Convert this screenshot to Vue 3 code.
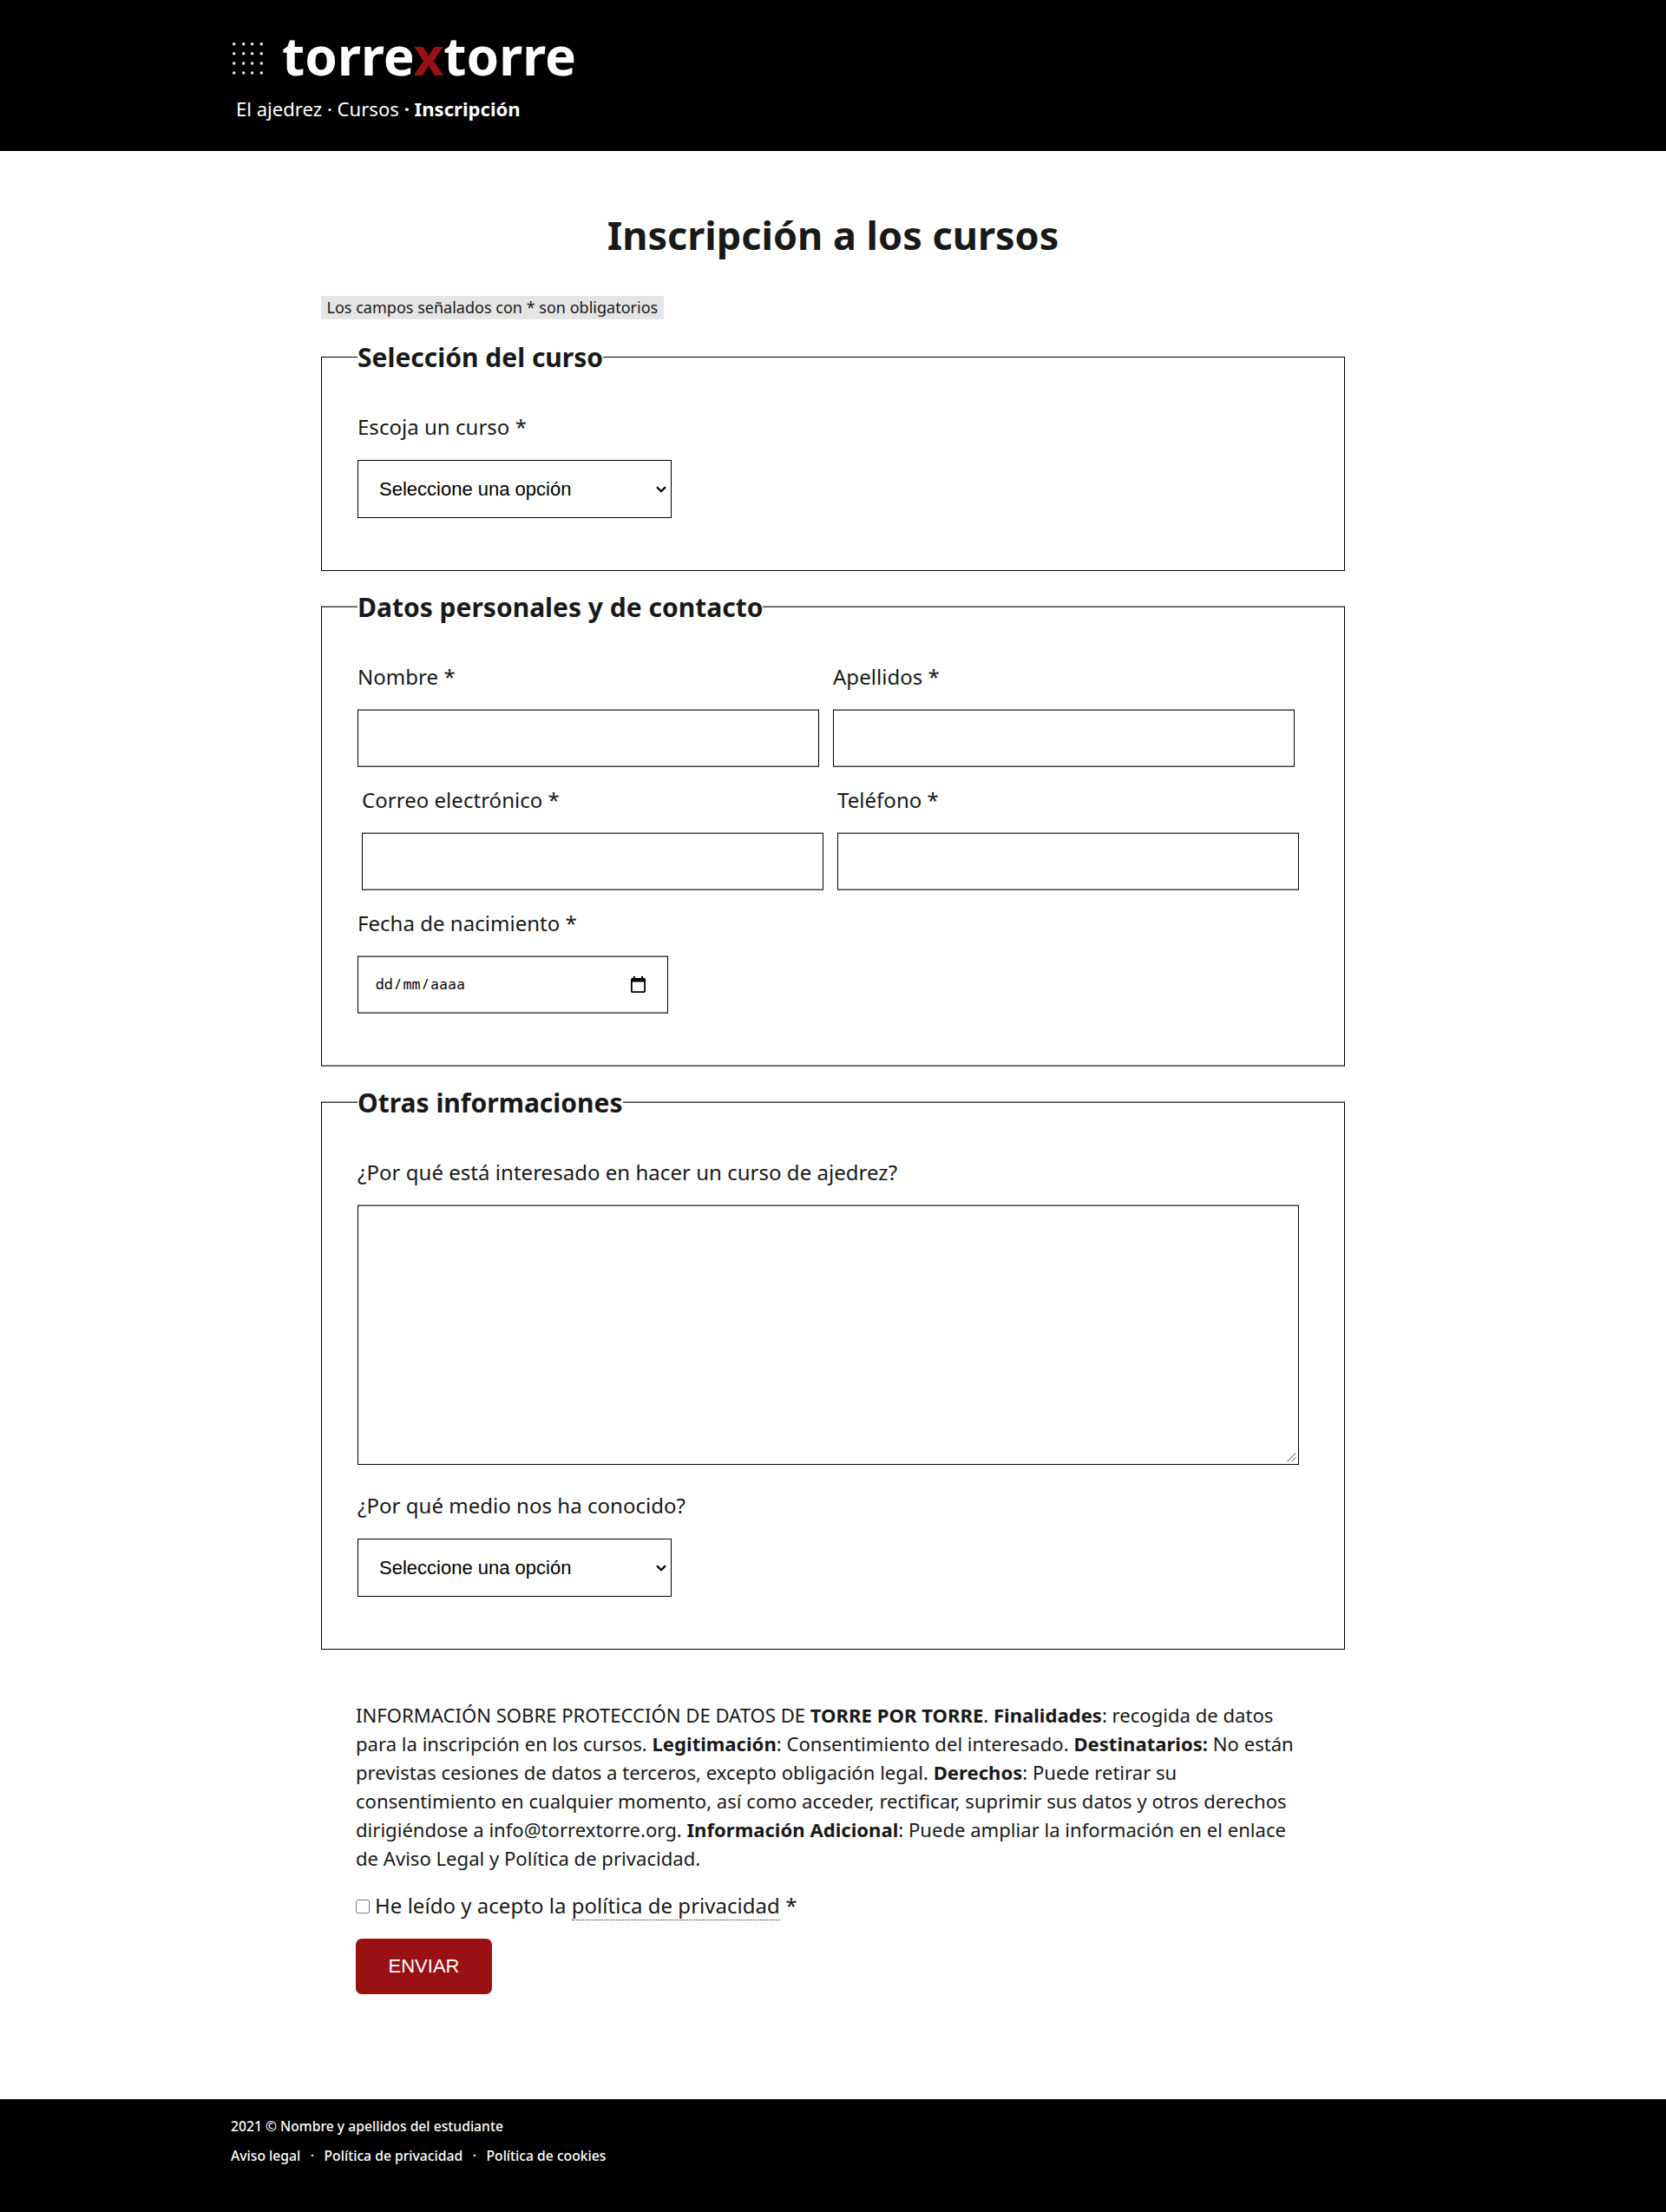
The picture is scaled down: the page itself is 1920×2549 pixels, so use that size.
<script setup>
const dots = [4.7, 15.7, 25.6, 36.3]
const rows = [4.7, 15.7, 27, 38]
</script>

<template>
  <div class="page">
    <header class="header">
      <div class="brand">
        <svg class="brand-mark" width="41" height="43" viewBox="0 0 41 43" aria-hidden="true">
          <g v-for="y in rows" :key="y">
            <circle v-for="x in dots" :key="x" :cx="x" :cy="y" r="1.8" fill="#e8e8e8" />
          </g>
        </svg>
        <span class="brand-name">torre<span class="brand-x">x</span>torre</span>
      </div>
      <nav class="nav"><a>El ajedrez</a> · <a>Cursos</a> <b>· Inscripción</b></nav>
    </header>

    <main class="main">
      <h1>Inscripción a los cursos</h1>
      <p class="hint">Los campos señalados con * son obligatorios</p>

      <form @submit.prevent>
        <fieldset>
          <legend>Selección del curso</legend>
          <div class="field">
            <label for="curso">Escoja un curso *</label>
            <div class="select">
              <select id="curso"><option>Seleccione una opción</option></select>
              <svg class="chevron" width="12" height="8" viewBox="0 0 12 8" aria-hidden="true"><path d="M1 1.2l5 5 5-5" fill="none" stroke="#000" stroke-width="2.3" /></svg>
            </div>
          </div>
        </fieldset>

        <fieldset class="soft">
          <legend>Datos personales y de contacto</legend>
          <div class="pair">
            <div class="field"><label for="nombre">Nombre *</label><input id="nombre" type="text"></div>
            <div class="field"><label for="apellidos">Apellidos *</label><input id="apellidos" type="text"></div>
          </div>
          <div class="pair pair-shift">
            <div class="field"><label for="correo">Correo electrónico *</label><input id="correo" type="email"></div>
            <div class="field"><label for="telefono">Teléfono *</label><input id="telefono" type="tel"></div>
          </div>
          <div class="field">
            <label>Fecha de nacimiento *</label>
            <div class="date">
              <span class="date-text"><span>dd</span>/<span>mm</span>/<span>aaaa</span></span>
              <svg width="17" height="19" viewBox="0 0 17 19" aria-hidden="true">
                <path fill="#000" fill-rule="evenodd" d="M3 0h2v2h7V0h2v2h1.2A1.8 1.8 0 0 1 17 3.8v13.4a1.8 1.8 0 0 1-1.8 1.8H1.8A1.8 1.8 0 0 1 0 17.2V3.8A1.8 1.8 0 0 1 1.8 2H3zM1.8 6.6v10.6h13.4V6.6z" />
              </svg>
            </div>
          </div>
        </fieldset>

        <fieldset class="soft-top">
          <legend>Otras informaciones</legend>
          <div class="field">
            <label for="motivo">¿Por qué está interesado en hacer un curso de ajedrez?</label>
            <div class="area">
              <textarea id="motivo"></textarea>
              <svg class="grip" width="11" height="11" viewBox="0 0 11 11" aria-hidden="true"><path d="M.3 10.3l10-10M5.3 10.3l5-5" fill="none" stroke="#444" stroke-width="1" /></svg>
            </div>
          </div>
          <div class="field field-medio">
            <label for="medio">¿Por qué medio nos ha conocido?</label>
            <div class="select">
              <select id="medio"><option>Seleccione una opción</option></select>
              <svg class="chevron" width="12" height="8" viewBox="0 0 12 8" aria-hidden="true"><path d="M1 1.2l5 5 5-5" fill="none" stroke="#000" stroke-width="2.3" /></svg>
            </div>
          </div>
        </fieldset>

        <section class="legal">
          <p>
            INFORMACIÓN SOBRE PROTECCIÓN DE DATOS DE <b>TORRE POR TORRE</b>. <b>Finalidades</b>: recogida de datos
            para la inscripción en los cursos. <b>Legitimación</b>: Consentimiento del interesado. <b>Destinatarios:</b> No están
            previstas cesiones de datos a terceros, excepto obligación legal. <b>Derechos</b>: Puede retirar su
            consentimiento en cualquier momento, así como acceder, rectificar, suprimir sus datos y otros derechos
            dirigiéndose a info@torrextorre.org. <b>Información Adicional</b>: Puede ampliar la información en el enlace
            de Aviso Legal y Política de privacidad.
          </p>
          <div class="accept">
            <input id="acepto" type="checkbox">
            <label for="acepto">He leído y acepto la <a>política de privacidad</a> *</label>
          </div>
          <button type="submit">ENVIAR</button>
        </section>
      </form>
    </main>

    <footer class="footer">
      <p>2021 © Nombre y apellidos del estudiante</p>
      <p class="links"><a>Aviso legal</a><span>·</span><a>Política de privacidad</a><span>·</span><a>Política de cookies</a></p>
    </footer>
  </div>
</template>

<style>
body { margin: 0; background: #fff; }
</style>

<style scoped>
* { box-sizing: border-box; }
.page { min-height: 2549px; display: flex; flex-direction: column; font-family: "Noto Sans", sans-serif; font-size: 24px; line-height: 36px; color: #191919; }
p, h1 { margin: 0; }

.header { height: 174px; padding: 34px 265px 0; background: #000; color: #fff; }
.brand { display: flex; align-items: flex-start; height: 60px; }
.brand-mark { margin-top: 12px; flex: none; }
.brand-name { margin-left: 19px; font-size: 60.35px; line-height: 60px; font-weight: 700; }
.brand-x { color: #991113; }
.nav { margin: 14px 0 0 7px; font-size: 22.1px; line-height: 34px; }

.main { width: 1180px; margin: 0 auto; padding-top: 67px; }
h1 { font-size: 45px; line-height: 60px; font-weight: 700; text-align: center; }
.hint { width: 395px; margin: 40px 0 21px; padding: 0 6.5px; background: #e5e5e5; font-size: 18.05px; line-height: 27px; white-space: nowrap; }

fieldset { min-width: 0; margin: 0 0 19px; padding: 41px 41px 60px; border: 1px solid #000; }
.soft { padding-bottom: 59px; border-top: 2px ridge #999; border-bottom: 2px ridge #999; }
.soft-top { margin-bottom: 0; border-top: 2px ridge #999; }
legend { height: 44px; padding: 1px 0 0; font-size: 30px; line-height: 44px; font-weight: 700; }

label { letter-spacing: 0.03px; }
.field { display: flex; flex-direction: column; align-items: flex-start; }
input[type="text"], input[type="email"], input[type="tel"], .date {
  width: 532px; height: 67px; margin: 19px 0 20px; padding: 0 20px; background: #fff;
  border: 1px solid #000; border-top: 2px ridge #999; border-bottom: 2px ridge #999; border-radius: 0; outline: 0;
}
.pair { display: flex; gap: 16px; }
.pair-shift { margin-left: 5px; margin-right: -5px; }
.date { display: flex; align-items: center; justify-content: space-between; width: 358px; margin-bottom: 0; padding: 0 25px 1px 19px; }
.date-text { font: 16.67px/24px "Noto Sans Mono", "DejaVu Sans Mono", monospace; color: #000; }
.date-text span { padding: 0 0.8px; }

.select { position: relative; width: 362px; height: 67px; margin-top: 20px; }
select { display: block; width: 100%; height: 100%; margin: 0; padding: 0 24px; border: 1px solid #000; border-radius: 0; background: #fff; color: #000; font: 22px "Liberation Sans", Arial, sans-serif; appearance: none; }
.chevron { position: absolute; right: 6px; top: 30px; pointer-events: none; }
.area { position: relative; width: 1085px; height: 300px; margin-top: 19px; }
textarea { display: block; width: 100%; height: 100%; margin: 0; padding: 20px; border: 1px solid #000; border-top: 2px ridge #999; border-radius: 0; background: #fff; resize: none; }
.grip { position: absolute; right: 3px; bottom: 3px; }
.field-medio { margin-top: 29px; }

.legal { width: 1090px; margin-left: 40px; padding-top: 59px; }
.legal p { font-size: 22.1px; line-height: 33px; }
.accept { display: flex; align-items: center; margin-top: 20px; }
.accept input { width: 16px; height: 16px; margin: 2px 6px 0 0; }
.accept a { border-bottom: 1px dotted #191919; }
button { display: block; width: 157px; height: 64px; margin-top: 20px; padding: 0; border: 0; border-radius: 7px; background: #991113; color: #fff; font: 22px "Liberation Sans", Arial, sans-serif; }

.footer { height: 130px; margin-top: auto; padding: 14px 266px 0; background: #000; color: #fff; font-size: 15.7px; font-weight: 500; line-height: 34px; }
.links { display: flex; }
.links span { width: 27.3px; text-align: center; }
</style>
